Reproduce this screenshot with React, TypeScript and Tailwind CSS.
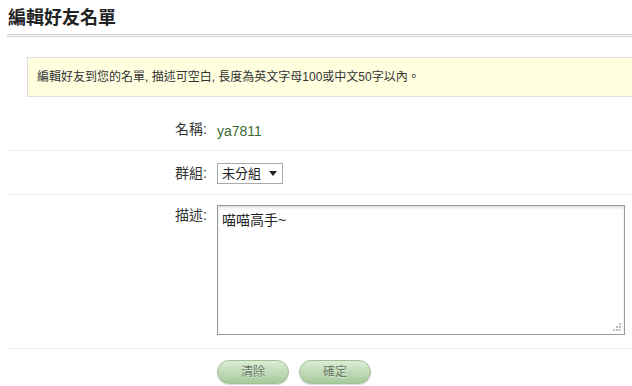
const font = { fontFamily: '"Liberation Sans", "Noto Sans CJK TC", Arial, sans-serif' }

function Row({ label, children, className }: { label: string; children: React.ReactNode; className?: string }) {
  return (
    <div className={`flex border-b border-[#ececec] ${className ?? ''}`}>
      <div className="w-[200px] shrink-0 text-right text-[14px] text-[#333] leading-[20px] pr-[1px]">{label}:</div>
      <div className="pl-[9px] flex-1">{children}</div>
    </div>
  )
}

function PillButton({ text }: { text: string }) {
  return (
    <button className="w-[72px] h-[24px] rounded-full border border-[#9fc196] bg-gradient-to-b from-[#dcecd6] to-[#a6c99c] text-[12px] text-[#667a62] [text-shadow:0_1px_0_rgba(255,255,255,0.5)] shadow-[0_1px_1px_rgba(0,0,0,0.15)]">
      {text}
    </button>
  )
}

export default function App() {
  return (
    <div className="w-[632px] h-[386px] overflow-hidden bg-white pl-[8px]" style={font}>
      <h1 className="pt-[7px] h-[34px] text-[18px] font-bold text-[#222] leading-[22px]">編輯好友名單</h1>
      <div className="border-t border-b border-[#cfcfcf] h-[3px] -ml-[1px]" />

      <div className="mt-[20px] ml-[19px] h-[40px] border-t border-b border-l border-[#dedede] bg-[#ffffe0] flex items-center pl-[9px] text-[12px] text-[#333]">
        編輯好友到您的名單, 描述可空白, 長度為英文字母100或中文50字以內。
      </div>

      <div className="mt-[11px]">
        <Row label="名稱" className="pt-[11px] h-[43px]">
          <span className="text-[14px] leading-[20px] text-[#3d6b34]">ya7811</span>
        </Row>
        <Row label="群組" className="pt-[12px] h-[44px]">
          <div className="w-[66px] h-[21px] border border-[#aaa] bg-white flex items-center pl-[4px] text-[13px] text-[#222]">
            <span>未分組</span>
            <svg width="8" height="5" viewBox="0 0 8 5" className="ml-[8px]">
              <path d="M0 0h8L4 5z" fill="#222" />
            </svg>
          </div>
        </Row>
        <Row label="描述" className="pt-[10px] h-[154px]">
          <div className="relative w-[408px] h-[130px] border border-[#999] bg-white shadow-[inset_0_2px_3px_rgba(0,0,0,0.12)] px-[4px] py-[5px] text-[14px] text-[#222] leading-[18px]">
            喵喵高手~
            <svg width="9" height="9" viewBox="0 0 9 9" className="absolute right-[3px] bottom-[3px]">
              <g fill="#bbb">
                <rect x="7" y="1" width="2" height="2" />
                <rect x="4" y="4" width="2" height="2" />
                <rect x="7" y="4" width="2" height="2" />
                <rect x="1" y="7" width="2" height="2" />
                <rect x="4" y="7" width="2" height="2" />
                <rect x="7" y="7" width="2" height="2" />
              </g>
            </svg>
          </div>
        </Row>
      </div>

      <div className="flex gap-[10px] pl-[209px] pt-[11px]">
        <PillButton text="清除" />
        <PillButton text="確定" />
      </div>
    </div>
  )
}
